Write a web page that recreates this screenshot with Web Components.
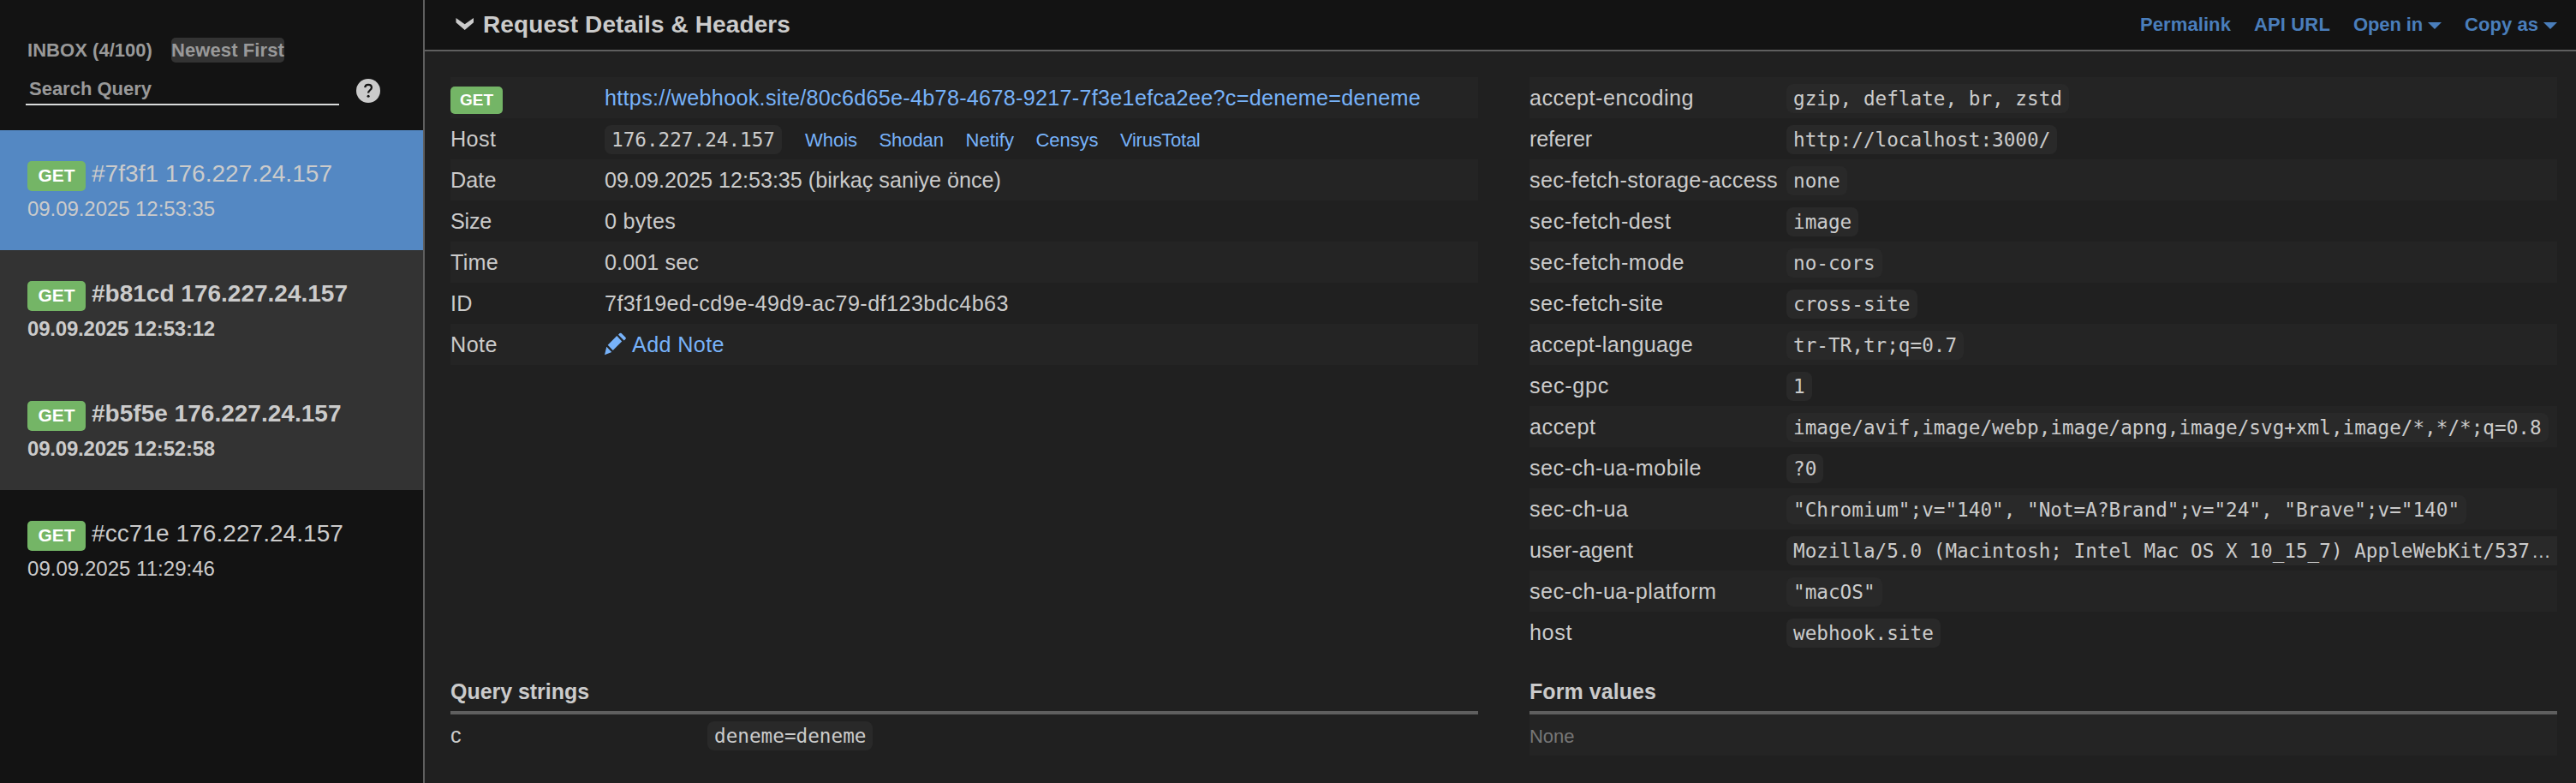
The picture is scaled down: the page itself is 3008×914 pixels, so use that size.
<!DOCTYPE html>
<html lang="tr">
<head>
<meta charset="utf-8">
<title>Webhook requests</title>
<style>
html,body{margin:0;height:914px;overflow:hidden;background:#202020}
body{font-family:"Liberation Sans",Arial,sans-serif;color:#ccc}
</style>
</head>
<body>
<webhook-app></webhook-app>
<script>
// Text run that spreads its letters to fill the width given in "w".
class FitText extends HTMLElement{
  connectedCallback(){
    if(this.shadowRoot)return;
    this.attachShadow({mode:'open'}).innerHTML='<style>:host{display:inline-block;white-space:pre;flex:none}</style><slot></slot>';
    const w=parseFloat(this.getAttribute('w'));
    if(!w)return;
    const n=this.textContent.length;
    const nat=this.getBoundingClientRect().width;
    this.style.letterSpacing=((w-nat)/n).toFixed(3)+'px';
  }
}
class MethodBadge extends HTMLElement{
  connectedCallback(){
    if(this.shadowRoot)return;
    this.attachShadow({mode:'open'}).innerHTML=`<style>
    :host{display:block;flex:none;box-sizing:border-box;width:68px;height:35px;line-height:33px;font-size:21px;font-weight:bold;text-align:center;color:#fff;background:#74b566;border-radius:5px}
    :host([small]){width:61px;height:32px;line-height:31px;font-size:19px}
    </style><slot></slot>`;
  }
}
class CodeValue extends HTMLElement{
  connectedCallback(){
    if(this.shadowRoot)return;
    this.attachShadow({mode:'open'}).innerHTML=`<style>
    :host{display:block;flex:none;box-sizing:border-box;height:34px;line-height:34px;margin-top:8px;padding:0 8px;background:#292929;border-radius:8px;white-space:pre;font-family:"DejaVu Sans Mono",monospace;font-size:22.68px}
    :host([clipped]){width:900px;border-radius:8px 0 0 8px;overflow:hidden}
    ::slotted(span){font-family:"Liberation Sans",sans-serif;margin-left:2px}
    </style><slot></slot>`;
  }
}
class RequestItem extends HTMLElement{
  connectedCallback(){
    if(this.shadowRoot)return;
    const g=k=>this.getAttribute(k);
    this.attachShadow({mode:'open'}).innerHTML=`<style>
    :host{display:block;box-sizing:border-box;height:140px;padding:36px 32px 0;color:#cbcbcb}
    :host([active]){background:#5488c3}
    :host([unread]){background:#333;font-weight:bold}
    .top{display:flex;gap:7px;height:35px}
    .id{font-size:28px;line-height:30px}
    .id fit-text{line-height:30px}
    .date{font-size:24px;line-height:28px;margin-top:7px}
    </style><div class="top"><method-badge>GET</method-badge><div class="id"><fit-text w="${g('w')}">${g('label')}</fit-text></div></div>
    <div class="date"><fit-text w="219">${g('date')}</fit-text></div>`;
  }
}
class SideBar extends HTMLElement{
  connectedCallback(){
    if(this.shadowRoot)return;
    this.attachShadow({mode:'open'}).innerHTML=`<style>
    :host{display:block;box-sizing:border-box;width:496px;height:914px;background:#131313;border-right:2px solid #5f5f5f}
    .head{box-sizing:border-box;height:152px;padding:44px 32px 0;font-size:22px;font-weight:bold;color:#999}
    .line{display:flex;gap:22px;height:29px;line-height:29px}
    .pill{background:#333;border-radius:5px}
    .search{display:flex;height:32px;margin:18px 0 0 -2px}
    .field{box-sizing:border-box;width:366px;height:32px;padding-left:4px;line-height:25px;border-bottom:2px solid #d9dbdb}
    svg{display:block;margin:1px 0 0 20px}
    </style>
    <div class="head"><div class="line"><fit-text w="146">INBOX (4/100)</fit-text><fit-text class="pill" w="132">Newest First</fit-text></div>
    <div class="search"><div class="field"><fit-text w="143">Search Query</fit-text></div>
    <svg width="28" height="28" viewBox="0 0 28 28"><circle cx="14" cy="14" r="14" fill="#cbcbcb"/><path d="M10.2 10.2C10.4 8 12 6.9 14 6.9c2.200 0 3.900 1.300 3.900 3.300 0 3-3.800 3.100-3.800 6.400" fill="none" stroke="#131313" stroke-width="2.200"/><circle cx="14.100" cy="20.300" r="1.550" fill="#131313"/></svg></div></div>
    <request-item active label="#7f3f1 176.227.24.157" date="09.09.2025 12:53:35" w="281"></request-item>
    <request-item unread label="#b81cd 176.227.24.157" date="09.09.2025 12:53:12" w="299"></request-item>
    <request-item unread label="#b5f5e 176.227.24.157" date="09.09.2025 12:52:58" w="291.500"></request-item>
    <request-item label="#cc71e 176.227.24.157" date="09.09.2025 11:29:46" w="294"></request-item>`;
  }
}
class TopBar extends HTMLElement{
  connectedCallback(){
    if(this.shadowRoot)return;
    const caret='<svg width="16" height="8" viewBox="0 0 16 8"><path d="M0 0H16L8 8Z" fill="#4a7ebb"/></svg>';
    this.attachShadow({mode:'open'}).innerHTML=`<style>
    :host{display:flex;box-sizing:border-box;height:60px;padding:0 22px 0 36px;background:#131313;border-bottom:2px solid #5f5f5f;font-weight:bold;align-items:flex-start}
    .chev{display:block;margin:20px 10px 0 0}
    h1{margin:0;font-size:28px;line-height:58px;flex:1;color:#cbcbcb}
    nav{display:flex;gap:27px;font-size:22px;line-height:58px;color:#4a7ebb}
    nav span{display:flex;gap:6px}
    nav svg{display:block;margin-top:26px}
    </style>
    <svg class="chev" width="22" height="16" viewBox="0 0 22 16"><path d="M0.500 1L10.700 8.300L21 1V6.300L10.700 15L0.500 6.300Z" fill="#cbcbcb"/></svg>
    <h1><fit-text w="359">Request Details &amp; Headers</fit-text></h1>
    <nav><fit-text w="106">Permalink</fit-text><fit-text w="89">API URL</fit-text><span><fit-text w="81">Open in</fit-text>${caret}</span><span><fit-text w="86">Copy as</fit-text>${caret}</span></nav>`;
  }
}
class DataRow extends HTMLElement{
  connectedCallback(){
    if(this.shadowRoot)return;
    this.attachShadow({mode:'open'}).innerHTML=`<style>
    :host{display:flex;height:48px;line-height:48px;font-size:25.200px;align-items:flex-start;color:#cbcbcb}
    :host([odd]){background:#242424}
    .k{flex:none;width:var(--key,300px)}
    .v{display:flex;flex:1;min-width:0}
    </style><div class="k"><slot name="k"></slot></div><div class="v"><slot></slot></div>`;
  }
}
class DataPanel extends HTMLElement{
  connectedCallback(){
    if(this.shadowRoot)return;
    this.attachShadow({mode:'open'}).innerHTML=`<style>
    :host{display:block;width:1200px}
    h2{box-sizing:border-box;margin:0;height:46px;font-size:25px;line-height:39px;border-bottom:4px solid #5f5f5f;color:#cbcbcb}
    </style>${this.hasAttribute('heading')?`<h2><fit-text w="${this.getAttribute('w')}">${this.getAttribute('heading')}</fit-text></h2>`:''}<slot></slot>`;
  }
}
const headers=[
 ['accept-encoding','gzip, deflate, br, zstd',192],['referer','http://localhost:3000/',73],
 ['sec-fetch-storage-access','none',290],['sec-fetch-dest','image',165.5],['sec-fetch-mode','no-cors',181],
 ['sec-fetch-site','cross-site',156.5],['accept-language','tr-TR,tr;q=0.7',191],['sec-gpc','1',93],
 ['accept','image/avif,image/webp,image/apng,image/svg+xml,image/*,*/*;q=0.8',77.5],['sec-ch-ua-mobile','?0',201],
 ['sec-ch-ua','"Chromium";v="140", "Not=A?Brand";v="24", "Brave";v="140"',115.5],
 ['user-agent','Mozilla/5.0 (Macintosh; Intel Mac OS X 10_15_7) AppleWebKit/537<span>…</span>',121],
 ['sec-ch-ua-platform','"macOS"',218.5],['host','webhook.site',50]];
const row=(i,k,kw,v)=>`<data-row${i%2?'':' odd'}><fit-text slot="k"${kw?` w="${kw}"`:''}>${k}</fit-text>${v}</data-row>`;
const text=(s,w)=>`<fit-text w="${w}">${s}</fit-text>`;
class WebhookApp extends HTMLElement{
  connectedCallback(){
    if(this.shadowRoot)return;
    this.attachShadow({mode:'open'}).innerHTML=`<style>
    :host{display:grid;grid-template-columns:496px 1fr;width:3008px;height:914px}
    .body{display:grid;grid-template-columns:1200px 1200px;grid-template-rows:698px auto;column-gap:60px;padding:30px 22px 0 30px}
    .facts{--key:180px}
    .link{color:#77b2f9}
    .tools{display:flex;gap:25.500px;margin-left:27px;font-size:22px;line-height:51px;color:#77b2f9}
    method-badge{margin-top:11px}
    .note{display:flex;gap:6px;color:#77b2f9}
    .note svg{display:block;margin-top:9px}
    .none{font-size:22px;color:#777}
    </style>
    <side-bar></side-bar>
    <main><top-bar></top-bar><div class="body">
    <data-panel class="facts">
      <data-row odd><method-badge slot="k" small>GET</method-badge><span class="link">${text('https://webhook.site/80c6d65e-4b78-4678-9217-7f3e1efca2ee?c=deneme=deneme',953)}</span></data-row>
      ${row(1,'Host',53.5,`<code-value><fit-text w="191">176.227.24.157</fit-text></code-value><span class="tools">${text('Whois',61)}${text('Shodan',75.5)}${text('Netify',56.5)}${text('Censys',73)}${text('VirusTotal',93.5)}</span>`)}
      ${row(2,'Date',53.5,text('09.09.2025 12:53:35 (birkaç saniye önce)',463))}
      ${row(3,'Size',48,text('0 bytes',83))}
      ${row(4,'Time',56,text('0.001 sec',110))}
      ${row(5,'ID',25.5,text('7f3f19ed-cd9e-49d9-ac79-df123bdc4b63',472))}
      ${row(6,'Note',55,`<span class="note"><svg width="26" height="30" viewBox="0 0 26 30"><path d="M0 27.200L2.300 17.700L8.300 23.900ZM3.700 15.700L14.300 5L20.200 11.500L9.700 22ZM16 3.700L17.600 2.100Q18.600 1.200 19.600 2.100L24.600 7.100Q25.300 8 24.500 8.800L22.700 10.400Z" fill="#77b2f9"/></svg>${text('Add Note',108)}</span>`)}
    </data-panel>
    <data-panel>${headers.map((h,i)=>row(i,h[0],h[2],`<code-value${h[0]=='user-agent'?' clipped':''}>${h[1]}</code-value>`)).join('')}</data-panel>
    <data-panel heading="Query strings" w="162">${row(1,'c',0,'<code-value>deneme=deneme</code-value>')}</data-panel>
    <data-panel heading="Form values" w="148">
      <data-row odd><span slot="k" class="none">${text('None',52.5)}</span></data-row></data-panel>
    </div></main>`;
  }
}
customElements.define('fit-text',FitText);
customElements.define('method-badge',MethodBadge);
customElements.define('code-value',CodeValue);
customElements.define('request-item',RequestItem);
customElements.define('data-row',DataRow);
customElements.define('data-panel',DataPanel);
customElements.define('side-bar',SideBar);
customElements.define('top-bar',TopBar);
customElements.define('webhook-app',WebhookApp);
</script>
</body>
</html>
